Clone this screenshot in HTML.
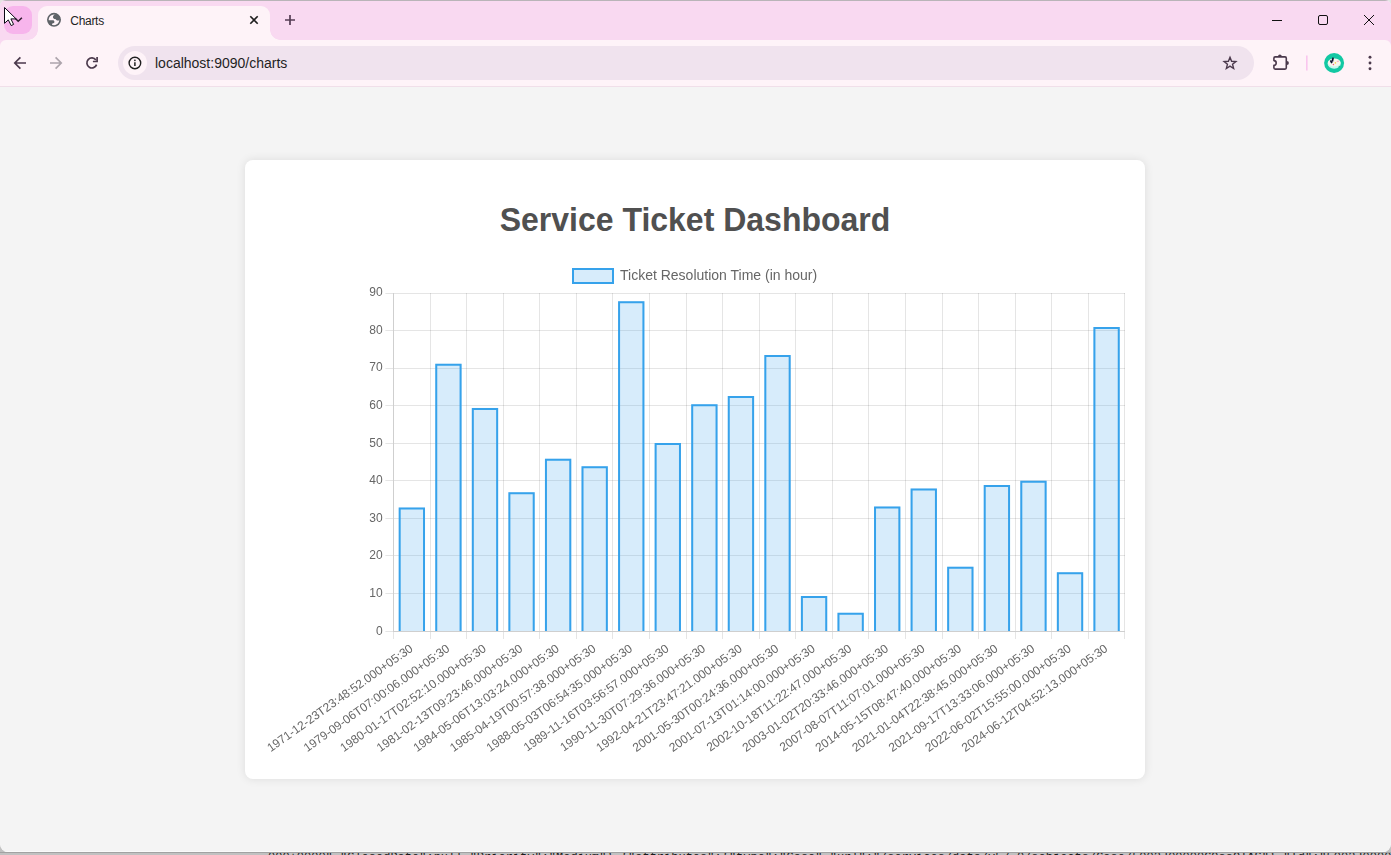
<!DOCTYPE html>
<html lang="en">
<head>
<meta charset="utf-8">
<title>Charts</title>
<style>
*{box-sizing:border-box}
html,body{margin:0;padding:0}
body{width:1391px;height:855px;overflow:hidden;position:relative;background:linear-gradient(#e4e4e4 0,#e4e4e4 400px,#c1c1c1 400px);font-family:"Liberation Sans",Arial,sans-serif;color:#1f1f1f}
.abs{position:absolute}
#frame{left:0;top:0;width:1391px;height:52px;background:#f9d9f1}
#topline{left:0;top:0;width:1391px;height:1px;background:#b9b4b8}
#tabsearch{left:4px;top:6px;width:28px;height:28px;border-radius:9px;background:#f7b5ec}
#tab{left:38px;top:6px;width:232px;height:34px;background:#fef3f8;border-radius:9px 9px 0 0}
#tab:before,#tab:after{content:"";position:absolute;bottom:0;width:10px;height:10px;background:radial-gradient(circle at 0 0,rgba(254,243,248,0) 9.5px,#fef3f8 10px)}
#tab:before{left:-10px}
#tab:after{right:-10px;background:radial-gradient(circle at 100% 0,rgba(254,243,248,0) 9.5px,#fef3f8 10px)}
#tabtitle{left:70.3px;top:14px;font-size:12px;line-height:14px;color:#1f1f1f;letter-spacing:-0.3px}
#toolbar{left:0;top:40px;width:1391px;height:46px;background:#fef3f8;border-radius:6px 6px 0 0}
#tbline{left:0;top:86px;width:1391px;height:1px;background:#f0dfe9}
#omni{left:118px;top:46px;width:1136px;height:34px;border-radius:17px;background:#f0e3ee}
#omniicon{left:123px;top:51px;width:24px;height:24px;border-radius:12px;background:#fef3f8}
#url{left:155px;top:55px;font-size:14px;line-height:16px;color:#1f1f1f}
#card{left:245px;top:160px;width:900px;height:619px;background:#fff;border-radius:8px;box-shadow:0 0 10px rgba(0,0,0,0.1)}
h1{position:absolute;left:245px;top:201px;width:900px;margin:0;text-align:center;font-size:32px;line-height:38px;font-weight:bold;color:#505050;transform:scaleY(1.045);transform-origin:50% 29.8px}
.chart{position:absolute;left:0;top:0;will-change:transform}
#below2{left:0;top:852px;width:1391px;height:3px;background:#c1c1c1;border-top:1px solid #a2a2a2;overflow:hidden;font-family:"Liberation Mono",monospace;font-size:12px;line-height:12px;color:#1a1a1a;white-space:nowrap}
#win{left:0;top:0;width:1391px;height:852px;overflow:hidden;border-radius:6px 6px 8px 8px;background:#f4f4f4}
#hl{left:0;top:851px;width:1391px;height:1px;background:#fbfbfb}
#content{left:0;top:87px;width:1391px;height:765px;background:#f4f4f4;border-radius:0 0 8px 8px}
svg.ic{position:absolute;overflow:visible}
</style>
</head>
<body>
<div class="abs" id="below2"><span style="position:absolute;top:-1px;left:268px">000+0000","ClosedDate":null,"Priority":"Medium"},{"attributes":{"type":"Case","url":"/services/data/v57.0/sobjects/Case/5002J00000G9ssQIAS"},"Id":"5002J00000G9s</span></div>
<div class="abs" id="win">
<div class="abs" id="content"></div>
<div class="abs" id="hl"></div>
<div class="abs" id="frame"></div>
<div class="abs" id="topline"></div>
<div class="abs" id="tabsearch"></div>
<div class="abs" id="toolbar"></div>
<div class="abs" id="tab"></div>
<div class="abs" id="tabtitle">Charts</div>
<div class="abs" id="tbline"></div>
<div class="abs" id="omni"></div>
<div class="abs" id="omniicon"></div>
<div class="abs" id="url">localhost:9090/charts</div>
<svg class="ic" style="left:0;top:0" width="1391" height="90" viewBox="0 0 1391 90" fill="none">
<!-- tab search chevron -->
<path d="M15.2 18.3L18.2 21.3L21.9 17.8" stroke="#2a1a2a" stroke-width="1.5"/>
<!-- mouse cursor -->
<path d="M4.5 7.5V23.3L8.3 19.9L11.2 25.6L13.6 24.4L10.9 18.9H16.1Z" fill="#fff" stroke="#0a0a14" stroke-width="1" stroke-linejoin="miter"/>
<!-- globe favicon -->
<circle cx="54" cy="19.85" r="7" fill="#5f6368"/>
<circle cx="54" cy="19.85" r="5.3" fill="#fef3f8"/>
<path d="M54.9 14.3C53.5 15.3 52.9 16.4 53 17.4C53.1 18.3 54 18.8 55.2 19.1C56 19.3 56.1 20.1 57 20.5C58 20.8 59 20.4 59.8 19.4L60.2 17L58 14.4Z" fill="#5f6368"/>
<path d="M48.2 20.3H52.8C53.8 20.3 54.5 20.9 54.4 21.9C54.3 22.9 53.5 23.2 52.5 23.5C51.8 23.8 52 24.6 52 25.6L49.5 24.4L48 22Z" fill="#5f6368"/>
<!-- tab close -->
<path d="M250.3 16.3L257.7 23.7M257.7 16.3L250.3 23.7" stroke="#1f1f1f" stroke-width="1.6"/>
<!-- new tab plus -->
<path d="M285 20H295M290 15V25" stroke="#553c54" stroke-width="1.7"/>
<!-- window controls -->
<path d="M1272 20.5H1282" stroke="#111" stroke-width="1"/>
<rect x="1318.5" y="15.5" width="9" height="9" rx="1.5" stroke="#111" stroke-width="1"/>
<path d="M1364 15L1374 25M1374 15L1364 25" stroke="#111" stroke-width="1"/>
<!-- back -->
<path d="M26 63H15M20.4 57.4L14.8 63L20.4 68.6" stroke="#4b394c" stroke-width="1.7"/>
<!-- forward -->
<path d="M50 63H61M55.6 57.4L61.2 63L55.6 68.6" stroke="#ada4ac" stroke-width="1.7"/>
<!-- reload -->
<path d="M96.6 64.6A5 5 0 1 1 95.9 60" stroke="#4b394c" stroke-width="1.7"/>
<path d="M97.1 57V61.5H92.9" stroke="#4b394c" stroke-width="1.7"/>
<!-- info -->
<circle cx="134.9" cy="63" r="5.8" stroke="#1f1f1f" stroke-width="1.4"/>
<path d="M134.9 62.2V66" stroke="#1f1f1f" stroke-width="1.5"/>
<circle cx="134.9" cy="60.3" r="0.85" fill="#1f1f1f"/>
<!-- star -->
<path d="M1230.00 57.30L1231.59 61.32L1235.90 61.58L1232.57 64.33L1233.64 68.52L1230.00 66.20L1226.36 68.52L1227.43 64.33L1224.10 61.58L1228.41 61.32Z" stroke="#4b394c" stroke-width="1.4" stroke-linejoin="miter"/>
<!-- extensions puzzle -->
<path d="M1273.9 60.6V58.2A1.3 1.3 0 0 1 1275.2 56.9H1285A1.3 1.3 0 0 1 1286.3 58.2V67.8A1.3 1.3 0 0 1 1285 69.1H1275.2A1.3 1.3 0 0 1 1273.9 67.8V65.2A2.3 2.3 0 0 0 1273.9 60.6Z" stroke="#4b394c" stroke-width="1.6" stroke-linejoin="round"/>
<path d="M1278 56.4A1.9 1.9 0 0 1 1281.8 56.4Z" fill="#4b394c"/>
<path d="M1286.9 60.9A2 2 0 0 1 1286.9 64.9Z" fill="#4b394c"/>
<!-- separator -->
<rect x="1306" y="55.5" width="1.6" height="15" fill="#f9c6ee"/>
<!-- avatar -->
<circle cx="1334.1" cy="63" r="10" fill="#12c8a3"/>
<ellipse cx="1334.2" cy="63.6" rx="6.6" ry="5.1" fill="#c9f7ef"/>
<ellipse cx="1334.2" cy="62.6" rx="6.3" ry="3.9" fill="#f9f5ec"/>
<path d="M1333.1 57.6L1332.3 61.6" stroke="#0b1030" stroke-width="1.7"/>
<path d="M1330.5 60.4L1331.9 63.2" stroke="#0b1030" stroke-width="1.7"/>
<circle cx="1333.4" cy="64.5" r="0.7" fill="#ef5c86"/>
<circle cx="1335.4" cy="62.9" r="0.8" fill="#f6d44a"/>
<path d="M1336.8 61.6L1339 61" stroke="#f7b6c2" stroke-width="1.1"/>
<path d="M1338.3 67.2L1339.9 66.1" stroke="#0a8f78" stroke-width="0.8"/>
<!-- menu dots -->
<circle cx="1370" cy="57.3" r="1.45" fill="#4b394c"/>
<circle cx="1370" cy="63" r="1.45" fill="#4b394c"/>
<circle cx="1370" cy="68.7" r="1.45" fill="#4b394c"/>
</svg>

<div class="abs" id="card"></div>
<h1>Service Ticket Dashboard</h1>
<svg class="chart" width="1391" height="855" viewBox="0 0 1391 855">
<path d="M385.37 293.5H393.0M394.0 293.5H1125.0M385.37 330.5H393.0M394.0 330.5H1125.0M385.37 368.5H393.0M394.0 368.5H1125.0M385.37 405.5H393.0M394.0 405.5H1125.0M385.37 443.5H393.0M394.0 443.5H1125.0M385.37 480.5H393.0M394.0 480.5H1125.0M385.37 518.5H393.0M394.0 518.5H1125.0M385.37 555.5H393.0M394.0 555.5H1125.0M385.37 593.5H393.0M394.0 593.5H1125.0M385.37 631.5H393.0M393.5 632.0V639.0M430.5 293.0V631.0M430.5 632.0V639.0M466.5 293.0V631.0M466.5 632.0V639.0M503.5 293.0V631.0M503.5 632.0V639.0M539.5 293.0V631.0M539.5 632.0V639.0M576.5 293.0V631.0M576.5 632.0V639.0M612.5 293.0V631.0M612.5 632.0V639.0M649.5 293.0V631.0M649.5 632.0V639.0M686.5 293.0V631.0M686.5 632.0V639.0M722.5 293.0V631.0M722.5 632.0V639.0M759.5 293.0V631.0M759.5 632.0V639.0M795.5 293.0V631.0M795.5 632.0V639.0M832.5 293.0V631.0M832.5 632.0V639.0M868.5 293.0V631.0M868.5 632.0V639.0M905.5 293.0V631.0M905.5 632.0V639.0M942.5 293.0V631.0M942.5 632.0V639.0M978.5 293.0V631.0M978.5 632.0V639.0M1015.5 293.0V631.0M1015.5 632.0V639.0M1051.5 293.0V631.0M1051.5 632.0V639.0M1088.5 293.0V631.0M1088.5 632.0V639.0M1124.5 293.0V631.0M1124.5 632.0V639.0" stroke="rgba(0,0,0,0.1)" stroke-width="1" fill="none"/>
<rect x="398.69" y="507.60" width="26.33" height="123.40" fill="rgba(54,162,235,0.2)"/>
<path d="M399.69 631.00V508.60H424.02V631.00" fill="none" stroke="#36a2eb" stroke-width="2"/>
<rect x="435.25" y="363.80" width="26.33" height="267.20" fill="rgba(54,162,235,0.2)"/>
<path d="M436.25 631.00V364.80H460.58V631.00" fill="none" stroke="#36a2eb" stroke-width="2"/>
<rect x="471.82" y="407.90" width="26.33" height="223.10" fill="rgba(54,162,235,0.2)"/>
<path d="M472.82 631.00V408.90H497.15V631.00" fill="none" stroke="#36a2eb" stroke-width="2"/>
<rect x="508.38" y="492.20" width="26.33" height="138.80" fill="rgba(54,162,235,0.2)"/>
<path d="M509.38 631.00V493.20H533.71V631.00" fill="none" stroke="#36a2eb" stroke-width="2"/>
<rect x="544.95" y="458.70" width="26.33" height="172.30" fill="rgba(54,162,235,0.2)"/>
<path d="M545.95 631.00V459.70H570.28V631.00" fill="none" stroke="#36a2eb" stroke-width="2"/>
<rect x="581.51" y="466.30" width="26.33" height="164.70" fill="rgba(54,162,235,0.2)"/>
<path d="M582.51 631.00V467.30H606.84V631.00" fill="none" stroke="#36a2eb" stroke-width="2"/>
<rect x="618.08" y="301.20" width="26.33" height="329.80" fill="rgba(54,162,235,0.2)"/>
<path d="M619.08 631.00V302.20H643.41V631.00" fill="none" stroke="#36a2eb" stroke-width="2"/>
<rect x="654.64" y="443.10" width="26.33" height="187.90" fill="rgba(54,162,235,0.2)"/>
<path d="M655.64 631.00V444.10H679.97V631.00" fill="none" stroke="#36a2eb" stroke-width="2"/>
<rect x="691.21" y="404.20" width="26.33" height="226.80" fill="rgba(54,162,235,0.2)"/>
<path d="M692.21 631.00V405.20H716.54V631.00" fill="none" stroke="#36a2eb" stroke-width="2"/>
<rect x="727.77" y="396.00" width="26.33" height="235.00" fill="rgba(54,162,235,0.2)"/>
<path d="M728.77 631.00V397.00H753.10V631.00" fill="none" stroke="#36a2eb" stroke-width="2"/>
<rect x="764.34" y="355.10" width="26.33" height="275.90" fill="rgba(54,162,235,0.2)"/>
<path d="M765.34 631.00V356.10H789.67V631.00" fill="none" stroke="#36a2eb" stroke-width="2"/>
<rect x="800.90" y="596.10" width="26.33" height="34.90" fill="rgba(54,162,235,0.2)"/>
<path d="M801.90 631.00V597.10H826.23V631.00" fill="none" stroke="#36a2eb" stroke-width="2"/>
<rect x="837.47" y="612.85" width="26.33" height="18.15" fill="rgba(54,162,235,0.2)"/>
<path d="M838.47 631.00V613.85H862.80V631.00" fill="none" stroke="#36a2eb" stroke-width="2"/>
<rect x="874.03" y="506.60" width="26.33" height="124.40" fill="rgba(54,162,235,0.2)"/>
<path d="M875.03 631.00V507.60H899.36V631.00" fill="none" stroke="#36a2eb" stroke-width="2"/>
<rect x="910.60" y="488.60" width="26.33" height="142.40" fill="rgba(54,162,235,0.2)"/>
<path d="M911.60 631.00V489.60H935.93V631.00" fill="none" stroke="#36a2eb" stroke-width="2"/>
<rect x="947.16" y="566.70" width="26.33" height="64.30" fill="rgba(54,162,235,0.2)"/>
<path d="M948.16 631.00V567.70H972.49V631.00" fill="none" stroke="#36a2eb" stroke-width="2"/>
<rect x="983.73" y="485.00" width="26.33" height="146.00" fill="rgba(54,162,235,0.2)"/>
<path d="M984.73 631.00V486.00H1009.06V631.00" fill="none" stroke="#36a2eb" stroke-width="2"/>
<rect x="1020.29" y="480.70" width="26.33" height="150.30" fill="rgba(54,162,235,0.2)"/>
<path d="M1021.29 631.00V481.70H1045.62V631.00" fill="none" stroke="#36a2eb" stroke-width="2"/>
<rect x="1056.86" y="572.20" width="26.33" height="58.80" fill="rgba(54,162,235,0.2)"/>
<path d="M1057.86 631.00V573.20H1082.19V631.00" fill="none" stroke="#36a2eb" stroke-width="2"/>
<rect x="1093.42" y="327.00" width="26.33" height="304.00" fill="rgba(54,162,235,0.2)"/>
<path d="M1094.42 631.00V328.00H1118.75V631.00" fill="none" stroke="#36a2eb" stroke-width="2"/>
<path d="M393.5 293.0V632.0M394.0 631.5H1125.0" stroke="rgba(0,0,0,0.19)" stroke-width="1" fill="none"/>
<g font-family="Liberation Sans, Arial, sans-serif" font-size="12" fill="#666">
<text x="382.57" y="296.20" text-anchor="end">90</text>
<text x="382.57" y="333.80" text-anchor="end">80</text>
<text x="382.57" y="371.40" text-anchor="end">70</text>
<text x="382.57" y="409.01" text-anchor="end">60</text>
<text x="382.57" y="446.61" text-anchor="end">50</text>
<text x="382.57" y="484.21" text-anchor="end">40</text>
<text x="382.57" y="521.81" text-anchor="end">30</text>
<text x="382.57" y="559.42" text-anchor="end">20</text>
<text x="382.57" y="597.02" text-anchor="end">10</text>
<text x="382.57" y="634.62" text-anchor="end">0</text>
<text transform="translate(411.45 647.00) rotate(-35.5)" text-anchor="end" y="4">1971-12-23T23:48:52.000+05:30</text>
<text transform="translate(448.02 647.00) rotate(-35.5)" text-anchor="end" y="4">1979-09-06T07:00:06.000+05:30</text>
<text transform="translate(484.58 647.00) rotate(-35.5)" text-anchor="end" y="4">1980-01-17T02:52:10.000+05:30</text>
<text transform="translate(521.15 647.00) rotate(-35.5)" text-anchor="end" y="4">1981-02-13T09:23:46.000+05:30</text>
<text transform="translate(557.71 647.00) rotate(-35.5)" text-anchor="end" y="4">1984-05-06T13:03:24.000+05:30</text>
<text transform="translate(594.28 647.00) rotate(-35.5)" text-anchor="end" y="4">1985-04-19T00:57:38.000+05:30</text>
<text transform="translate(630.84 647.00) rotate(-35.5)" text-anchor="end" y="4">1988-05-03T06:54:35.000+05:30</text>
<text transform="translate(667.41 647.00) rotate(-35.5)" text-anchor="end" y="4">1989-11-16T03:56:57.000+05:30</text>
<text transform="translate(703.97 647.00) rotate(-35.5)" text-anchor="end" y="4">1990-11-30T07:29:36.000+05:30</text>
<text transform="translate(740.54 647.00) rotate(-35.5)" text-anchor="end" y="4">1992-04-21T23:47:21.000+05:30</text>
<text transform="translate(777.10 647.00) rotate(-35.5)" text-anchor="end" y="4">2001-05-30T00:24:36.000+05:30</text>
<text transform="translate(813.67 647.00) rotate(-35.5)" text-anchor="end" y="4">2001-07-13T01:14:00.000+05:30</text>
<text transform="translate(850.23 647.00) rotate(-35.5)" text-anchor="end" y="4">2002-10-18T11:22:47.000+05:30</text>
<text transform="translate(886.80 647.00) rotate(-35.5)" text-anchor="end" y="4">2003-01-02T20:33:46.000+05:30</text>
<text transform="translate(923.36 647.00) rotate(-35.5)" text-anchor="end" y="4">2007-08-07T11:07:01.000+05:30</text>
<text transform="translate(959.93 647.00) rotate(-35.5)" text-anchor="end" y="4">2014-05-15T08:47:40.000+05:30</text>
<text transform="translate(996.49 647.00) rotate(-35.5)" text-anchor="end" y="4">2021-01-04T22:38:45.000+05:30</text>
<text transform="translate(1033.06 647.00) rotate(-35.5)" text-anchor="end" y="4">2021-09-17T13:33:06.000+05:30</text>
<text transform="translate(1069.62 647.00) rotate(-35.5)" text-anchor="end" y="4">2022-06-02T15:55:00.000+05:30</text>
<text transform="translate(1106.19 647.00) rotate(-35.5)" text-anchor="end" y="4">2024-06-12T04:52:13.000+05:30</text>
</g>
<rect x="573" y="269" width="40" height="14" fill="rgba(54,162,235,0.2)" stroke="#36a2eb" stroke-width="2"/>
<text x="620" y="280" font-family="Liberation Sans, Arial, sans-serif" font-size="14" fill="#666">Ticket Resolution Time (in hour)</text>
</svg>
</div>
</body>
</html>
